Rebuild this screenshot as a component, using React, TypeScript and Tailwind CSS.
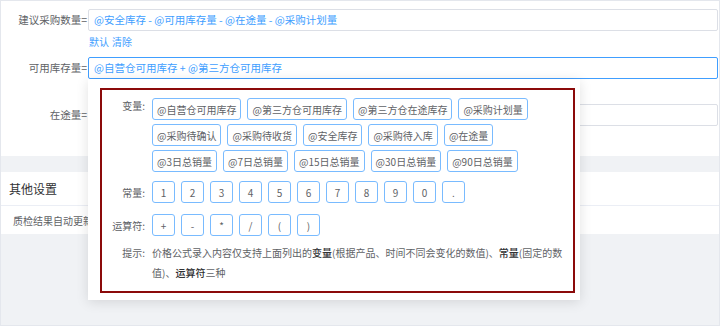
import { type ReactNode } from "react";

const variables = [
  ["@自营仓可用库存", "@第三方仓可用库存", "@第三方仓在途库存", "@采购计划量"],
  ["@采购待确认", "@采购待收货", "@安全库存", "@采购待入库", "@在途量"],
  ["@3日总销量", "@7日总销量", "@15日总销量", "@30日总销量", "@90日总销量"],
];
const constants = ["1", "2", "3", "4", "5", "6", "7", "8", "9", "0", "."];
const operators = ["+", "-", "*", "/", "(", ")"];

const FormRow = ({ label, children }: { label: string; children: ReactNode }) => (
  <div className="flex items-center">
    <div className="w-[87px] shrink-0 text-right text-[10.5px] text-[#606266] pr-[1px]">{label}</div>
    {children}
  </div>
);

const Tag = ({ text }: { text: string }) => (
  <div className="h-[22px] px-[4px] flex items-center border border-[#79bbff] rounded-[3px] text-[10px] text-[#606266] bg-white">
    {text}
  </div>
);

const Key = ({ text }: { text: string }) => (
  <div className="h-[22px] w-[23px] flex items-center justify-center border border-[#79bbff] rounded-[3px] text-[10px] text-[#606266] bg-white">
    {text}
  </div>
);

const PopLabel = ({ text }: { text: string }) => (
  <div className="w-[50px] shrink-0 text-right pr-[7px] text-[10px] text-[#606266]">{text}</div>
);

const FormulaPopover = () => (
  <div className="absolute left-[87px] top-[78px] w-[492px] h-[221px] bg-white shadow-[0_2px_12px_rgba(0,0,0,0.12)] pl-[12px] pt-[9px]">
    <div className="w-[475px] h-[205px] border-2 border-[#8b0a0a] pt-[8px]">
      {/* 变量 */}
      <div className="flex">
        <PopLabel text="变量:" />
        <div className="flex flex-col gap-y-[4px]">
          {variables.map((row, i) => (
            <div key={i} className="flex gap-x-[6px]">
              {row.map((v) => (
                <Tag key={v} text={v} />
              ))}
            </div>
          ))}
        </div>
      </div>
      {/* 常量 */}
      <div className="flex items-center mt-[9px]">
        <PopLabel text="常量:" />
        <div className="flex gap-x-[6px]">
          {constants.map((c) => (
            <Key key={c} text={c} />
          ))}
        </div>
      </div>
      {/* 运算符 */}
      <div className="flex items-center mt-[11px]">
        <PopLabel text="运算符:" />
        <div className="flex gap-x-[6px]">
          {operators.map((o) => (
            <Key key={o} text={o} />
          ))}
        </div>
      </div>
      <div className="flex mt-[7px] leading-[20px]">
        <PopLabel text="提示:" />
        <p className="w-[420px] text-[10px] text-[#606266]">
          价格公式录入内容仅支持上面列出的<span className="font-medium text-[#303133]">变量</span>
          (根据产品、时间不同会变化的数值)、<span className="font-medium text-[#303133]">常量</span>
          (固定的数值)、<span className="font-medium text-[#303133]">运算符</span>三种
        </p>
      </div>
    </div>
  </div>
);

export default function App() {
  return (
    <div
      className="relative w-[720px] h-[326px] overflow-hidden border border-[#e4e7ed] bg-[#f0f2f5]"
      style={{ fontFamily: '"Noto Sans CJK SC", "Noto Sans", sans-serif' }}
    >
      <div className="bg-white pt-[8px] pr-[1px] h-[155px]">
        <FormRow label="建议采购数量=">
          <div className="flex-1 h-[22px] border border-[#dcdfe6] rounded-[2px] px-[5px] flex items-center text-[10.5px] text-[#409eff] whitespace-pre">
            @安全库存 - @可用库存量 - @在途量 - @采购计划量
          </div>
        </FormRow>
        <div className="ml-[88px] h-[14px] mt-[3px] flex items-center gap-x-[3px] text-[10px] text-[#409eff]">
          <span>默认</span>
          <span>清除</span>
        </div>
        <div className="mt-[9px]">
          <FormRow label="可用库存量=">
            <div className="flex-1 h-[22px] border border-[#409eff] rounded-[2px] px-[5px] flex items-center text-[10.5px] text-[#409eff] whitespace-pre">
              @自营仓可用库存 + @第三方仓可用库存
            </div>
          </FormRow>
        </div>
        <div className="mt-[25px]">
          <FormRow label="在途量=">
            <div className="flex-1 h-[22px] border border-[#dcdfe6] rounded-[2px]" />
          </FormRow>
        </div>
      </div>
      <div className="h-[16px]" />
      <div className="bg-white">
        <div className="h-[34px] flex items-center px-[8px] text-[12px] text-[#303133] border-b border-[#ebeef5]">
          其他设置
        </div>
        <div className="h-[28px] flex items-center px-[12px] text-[10px] text-[#606266]">
          质检结果自动更新库存
        </div>
      </div>
      <FormulaPopover />
    </div>
  );
}
